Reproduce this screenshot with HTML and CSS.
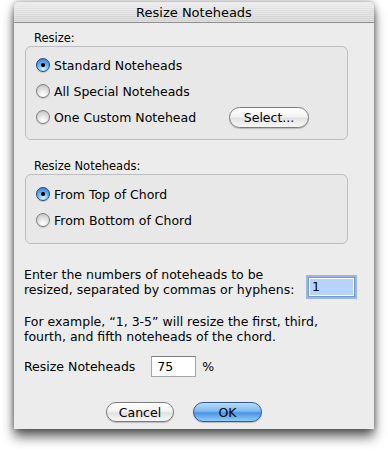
FILE: index.html
```html
<!DOCTYPE html>
<html lang="en">
<head>
    <meta charset="UTF-8">
    <title>Resize Noteheads</title>
    <link rel="stylesheet" href="styles.css">
</head>
<body>

    <div class="window">
        <div class="titlebar">Resize Noteheads</div>

        <div class="content">
            <div class="group-label first">Resize:</div>
            <div class="group group-resize">
                <div class="radio-row"><span class="radio on"></span>Standard Noteheads</div>
                <div class="radio-row"><span class="radio"></span>All Special Noteheads</div>
                <div class="radio-row">
                    <span class="radio"></span><span class="custom-label">One Custom Notehead</span>
                    <button class="btn select-btn">Select...</button>
                </div>
            </div>

            <div class="group-label">Resize Noteheads:</div>
            <div class="group group-from">
                <div class="radio-row"><span class="radio on"></span>From Top of Chord</div>
                <div class="radio-row"><span class="radio"></span>From Bottom of Chord</div>
            </div>

            <div class="enter-row">
                <p class="text">Enter the numbers of noteheads to be<br>resized, separated by commas or hyphens:</p>
                <div class="field field-focus"><span class="selected">1</span></div>
            </div>

            <p class="text example">For example, “1, 3-5” will resize the first, third,<br>fourth, and fifth noteheads of the chord.</p>

            <div class="percent-row">
                <span>Resize Noteheads</span>
                <div class="field field-percent">75</div>
                <span>%</span>
            </div>

            <div class="buttons">
                <button class="btn cancel-btn">Cancel</button>
                <button class="btn ok-btn">OK</button>
            </div>
        </div>
    </div>

</body>
</html>
```

FILE: styles.css
```css
/* General styles */
html {
    background-color: #fff;
}

body {
    margin: 0;
    padding: 2px 14px 24px;
    min-height: 453px;
    box-sizing: border-box;
    background-color: #fff;
    font-family: "DejaVu Sans", Verdana, sans-serif;
    font-size: 12px;
    color: #000;
}

.window {
    width: 360px;
    height: 427px;
    background-color: #ececec;
    border-radius: 5px 5px 0 0;
    box-shadow: 0 8px 12px rgba(0, 0, 0, 0.6), 0 0 6px rgba(0, 0, 0, 0.4);
    display: flex;
    flex-direction: column;
    overflow: hidden;
}

.titlebar {
    height: 20px;
    line-height: 21px;
    text-align: center;
    font-size: 13px;
    border-bottom: 1px solid #8e8e8e;
    background: repeating-linear-gradient(#0000 0 1px, rgba(255, 255, 255, 0.35) 1px 2px),
                linear-gradient(#eaeaea, #cfcfcf);
}

.content {
    padding: 0 0 0 10px;
    display: flex;
    flex-direction: column;
}

/* Group boxes */
.group-label {
    font-size: 11.5px;
    line-height: 15px;
    height: 15px;
    margin: 19px 0 0 10px;
}

.group-label.first {
    margin-top: 8px;
}

.group {
    box-sizing: border-box;
    width: 323px;
    margin-left: 1px;
    border: 1px solid #bdbdbd;
    border-radius: 6px;
    background-color: #e8e8e8;
    padding: 5px 0 0 10px;
}

.group-resize {
    height: 94px;
}

.group-from {
    height: 70px;
    padding-top: 6px;
}

.radio-row {
    display: flex;
    align-items: center;
    height: 26px;
    font-size: 12.5px;
}

.radio {
    box-sizing: border-box;
    width: 14px;
    height: 14px;
    margin-right: 4px;
    border-radius: 50%;
    border: 1px solid #7d7d7d;
    background: radial-gradient(circle at 50% 80%, #ffffff 0, #e4e4e4 45%, #b9b9b9 100%);
    box-shadow: 0 1px 1px rgba(0, 0, 0, 0.15);
}

.radio.on {
    border-color: #24467f;
    background: radial-gradient(circle at 50% 50%, #000 0 1.8px, transparent 2.4px),
                radial-gradient(circle at 50% 85%, #d6f6ff 0, #6ab9f4 45%, #2f6fcc 100%);
}

.custom-label {
    width: 175px;
}

/* Buttons */
.btn {
    box-sizing: border-box;
    height: 21px;
    border-radius: 11px;
    border: 1px solid #7c7c7c;
    font-family: inherit;
    font-size: 12.5px;
    color: #000;
    padding: 0;
    background: linear-gradient(#ffffff 0, #f4f4f4 45%, #e2e2e2 55%, #f8f8f8 100%);
    box-shadow: 0 1px 1px rgba(0, 0, 0, 0.2);
}

.select-btn {
    width: 80px;
}

/* Text blocks */
.text {
    margin: 0;
    line-height: 15px;
    font-size: 12.5px;
}

.enter-row {
    display: flex;
    align-items: flex-end;
    margin-top: 23px;
}

.enter-row .text {
    width: 285px;
}

.field {
    box-sizing: border-box;
    background-color: #fff;
    font-size: 12.5px;
}

.field-focus {
    width: 45px;
    height: 18px;
    margin: 0 0 1px 0;
    border: 1px solid #fff;
    background-color: #b7d3fb;
    box-shadow: 0 0 0 1px #6f9bd6, 0 0 0 3px rgba(125, 165, 222, 0.75);
    line-height: 16px;
    padding-left: 2px;
}

.example {
    margin-top: 17px;
}

.percent-row {
    display: flex;
    align-items: center;
    margin-top: 12px;
    font-size: 12.5px;
}

.field-percent {
    width: 45px;
    height: 21px;
    margin: 0 6px 0 16px;
    border: 1px solid #a5a5a5;
    border-top-color: #7d7d7d;
    line-height: 19px;
    padding-left: 5px;
}

.buttons {
    display: flex;
    gap: 19px;
    margin: 25px 0 0 82px;
}

.cancel-btn {
    width: 68px;
    height: 20px;
}

.ok-btn {
    width: 69px;
    height: 20px;
    border-color: #35589a;
    background: linear-gradient(#b9dcfa 0, #7fbaf0 45%, #4a93e6 55%, #8fcff9 100%);
}
```
